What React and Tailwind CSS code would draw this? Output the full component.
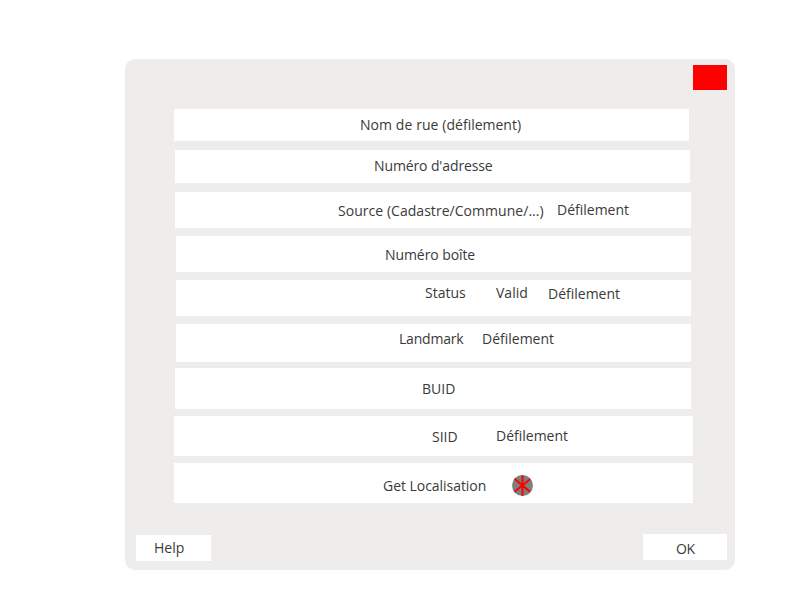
function Label({ className, children }) {
  return <span className={`block shrink-0 whitespace-nowrap ${className}`}>{children}</span>;
}

function Row({ className, children }) {
  return <div className={`flex items-start bg-white ${className}`}>{children}</div>;
}

function LocateIcon() {
  return (
    <svg className="ml-[25px] mt-3 h-[21px] w-[21px] shrink-0" viewBox="0 0 21 21">
      <circle cx="10.5" cy="10.5" r="10.5" fill="#7f7f7f" />
      <path d="M10.5 0.3V20.7M2.5 3.7L18 16.8M18 4.2L2.5 16.8" stroke="#ff0000" strokeWidth="2" fill="none" />
    </svg>
  );
}

export default function App() {
  return (
    <div className="h-[600px] w-[800px] overflow-hidden bg-white pl-[125px] pt-[59px] font-['Open_Sans',sans-serif] text-[14px] leading-5 text-[#3a3a3a]">
      <div className="flex h-[511px] w-[610px] flex-col rounded-[10px] bg-[#eeedeb] pt-1.5">
        <div className="mr-2 h-[25px] w-[34px] self-end bg-[#ff0000]" />
        <div className="mt-[19px] flex flex-col">
          <Row className="ml-[49px] h-8 w-[515px]">
            <Label className="ml-[186px] mt-1.5 w-[162px] [word-spacing:0.3px]">Nom de rue (défilement)</Label>
          </Row>
          <Row className="ml-[50px] mt-[9px] h-[33px] w-[515px]">
            <Label className="ml-[199px] mt-1.5 w-[120px] tracking-[-0.12px]">Numéro d'adresse</Label>
          </Row>
          <Row className="ml-[50px] mt-[9px] h-9 w-[516px]">
            <Label className="ml-[163px] mt-[9px] w-[219px] tracking-[0.04px]">Source (Cadastre/Commune/...)</Label>
            <Label className="mt-2">Défilement</Label>
          </Row>
          <Row className="ml-[51px] mt-2 h-9 w-[515px]">
            <Label className="ml-[209px] mt-[9px] tracking-[-0.08px]">Numéro boîte</Label>
          </Row>
          <Row className="ml-[51px] mt-2 h-9 w-[515px]">
            <Label className="ml-[249px] mt-[3px] w-[71px]">Status</Label>
            <Label className="mt-[3px] w-[52px]">Valid</Label>
            <Label className="mt-1">Défilement</Label>
          </Row>
          <Row className="ml-[51px] mt-2 h-[38px] w-[515px]">
            <Label className="ml-[223px] mt-[5px] w-[83px] tracking-[-0.2px]">Landmark</Label>
            <Label className="mt-[5px]">Défilement</Label>
          </Row>
          <Row className="ml-[50px] mt-1.5 h-[41px] w-[516px]">
            <Label className="ml-[247px] mt-[11px]">BUID</Label>
          </Row>
          <Row className="ml-[49px] mt-[7px] h-10 w-[519px]">
            <Label className="ml-[258px] mt-[11px] w-[64px]">SIID</Label>
            <Label className="mt-2.5">Défilement</Label>
          </Row>
          <Row className="ml-[49px] mt-[7px] h-10 w-[519px]">
            <Label className="ml-[209px] mt-[13px] w-[104px] tracking-[-0.04px]">Get Localisation</Label>
            <LocateIcon />
          </Row>
        </div>
        <div className="mt-[31px] flex items-start justify-between pl-[11px] pr-2">
          <button className="mt-px flex h-[26px] w-[75px] items-start bg-white">
            <Label className="ml-[18px] mt-[3px]">Help</Label>
          </button>
          <button className="flex h-[26px] w-[84px] items-start bg-white">
            <Label className="ml-[33px] mt-[5px] tracking-[-0.3px]">OK</Label>
          </button>
        </div>
      </div>
    </div>
  );
}
